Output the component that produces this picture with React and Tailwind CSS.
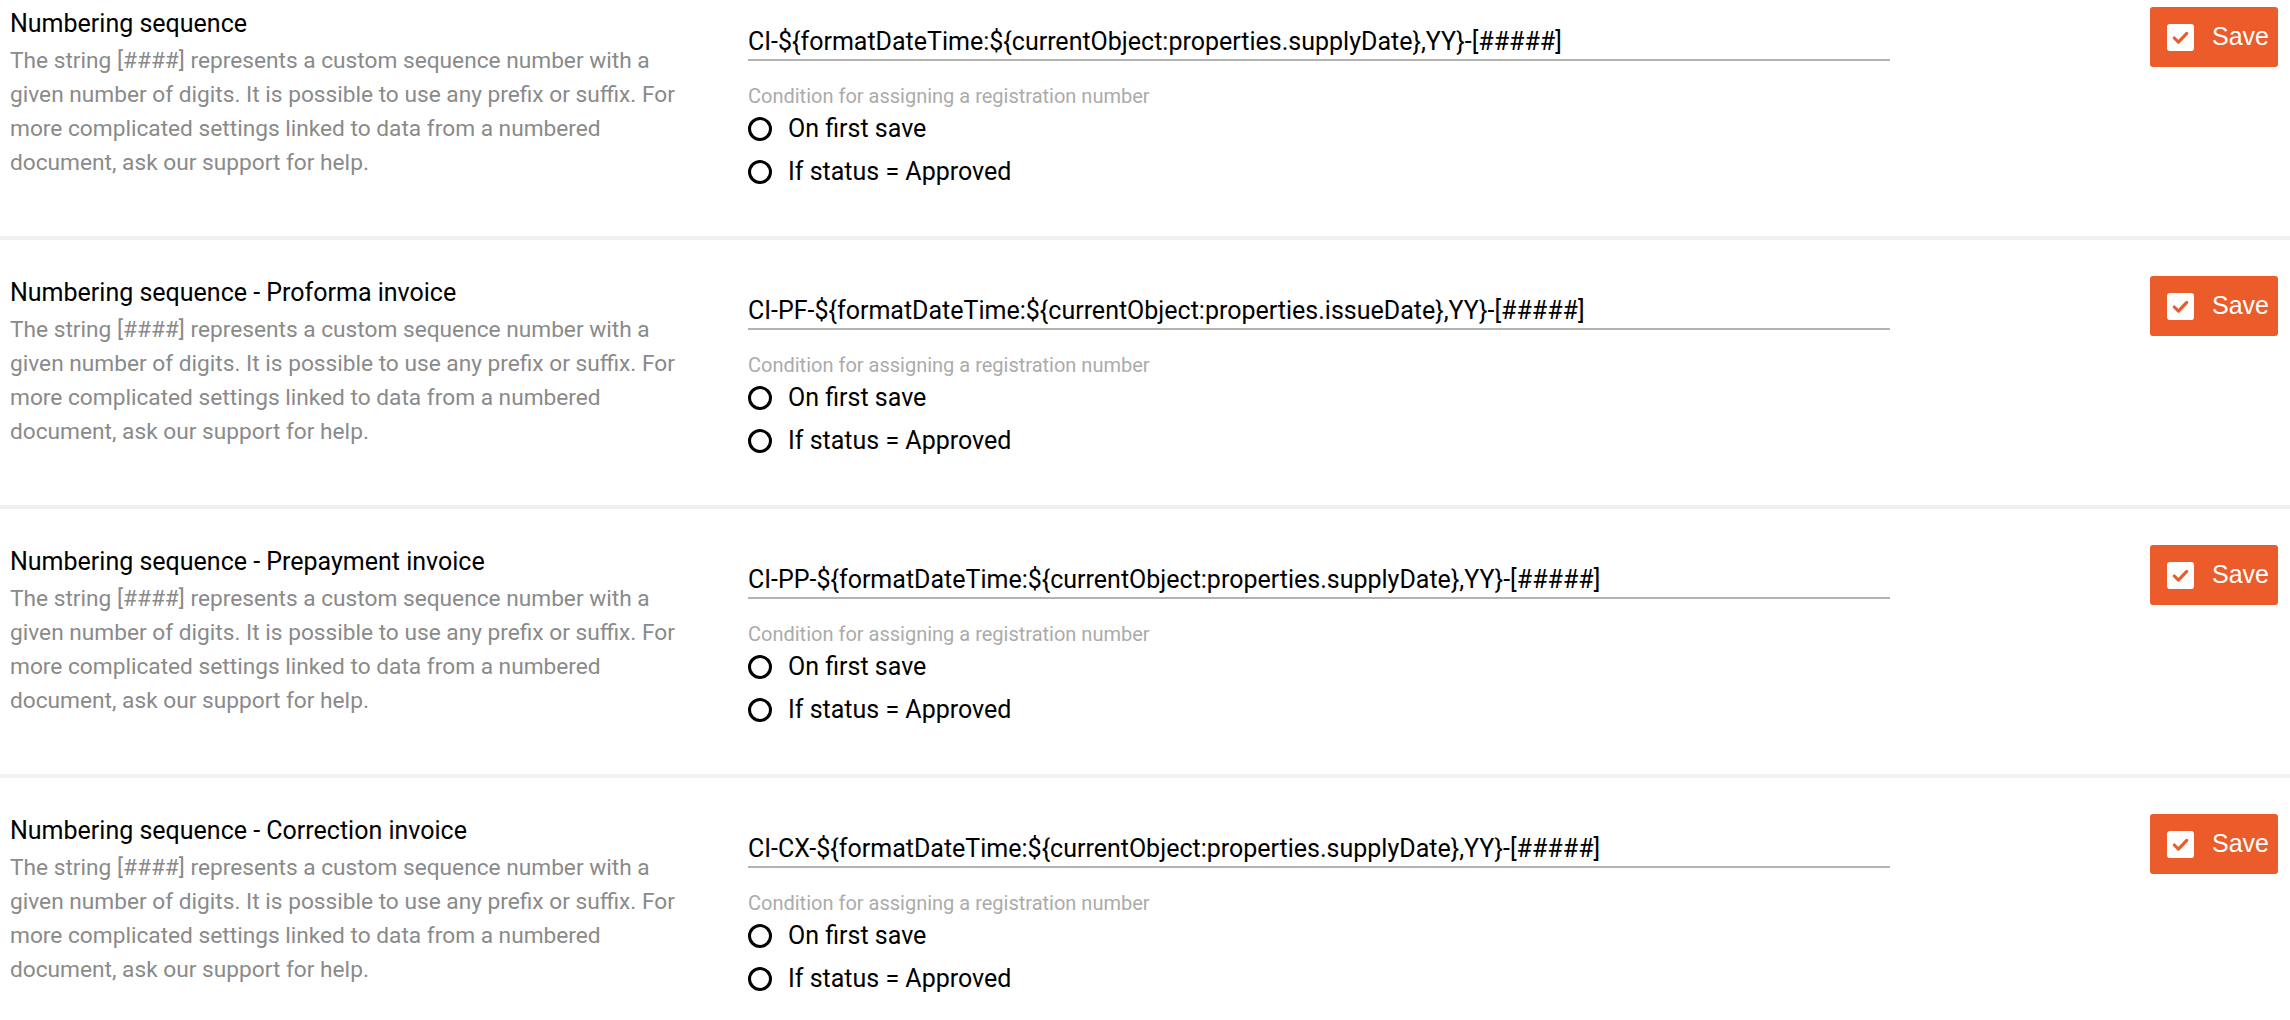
import React from "react";

const sections = [
  {
    title: "Numbering sequence",
    value: "CI-${formatDateTime:${currentObject:properties.supplyDate},YY}-[#####]",
  },
  {
    title: "Numbering sequence - Proforma invoice",
    value: "CI-PF-${formatDateTime:${currentObject:properties.issueDate},YY}-[#####]",
  },
  {
    title: "Numbering sequence - Prepayment invoice",
    value: "CI-PP-${formatDateTime:${currentObject:properties.supplyDate},YY}-[#####]",
  },
  {
    title: "Numbering sequence - Correction invoice",
    value: "CI-CX-${formatDateTime:${currentObject:properties.supplyDate},YY}-[#####]",
  },
];

function CheckIcon() {
  return (
    <svg width="27" height="27" viewBox="0 0 26 26">
      <rect x="0" y="0" width="26" height="26" rx="3" fill="#ffffff" />
      <polyline
        points="7,13.5 11,17.5 19,9"
        fill="none"
        stroke="#ec5b2a"
        strokeWidth="3"
        strokeLinecap="round"
        strokeLinejoin="round"
      />
    </svg>
  );
}

function Radio({ label }) {
  return (
    <div className="flex items-center h-[29px]">
      <span className="w-[24px] h-[24px] rounded-full border-[3.5px] border-black box-border shrink-0" />
      <span className="ml-[16px] text-[25px] leading-[29px] text-black">{label}</span>
    </div>
  );
}

function Section({ title, value, first }) {
  return (
    <div
      className={
        "flex items-start border-b-4 border-[#f0f0f0] pb-[50px] " +
        (first ? "pt-[7px]" : "pt-[36px]")
      }
    >
      <div className="w-[748px] shrink-0 pl-[10px]">
        <div className="mt-[2px] text-[25px] leading-[29px] text-black">{title}</div>
        <div className="mt-[6px] w-[680px] text-[22.7px] leading-[34px] text-[#8a8a8a]">
          The string [####] represents a custom sequence number with a given number of digits. It is possible to use any prefix or suffix. For more complicated settings linked to data from a numbered document, ask our support for help.
        </div>
      </div>
      <div className="w-[1142px] shrink-0 pt-[20px]">
        <div className="text-[25px] leading-[29px] text-black pb-[3px] border-b-2 border-[#b3b3b3] whitespace-nowrap">
          {value}
        </div>
        <div className="mt-[24px] text-[20px] leading-[23px] text-[#ababab]">
          Condition for assigning a registration number
        </div>
        <div className="mt-[6px] flex flex-col gap-[14px]">
          <Radio label="On first save" />
          <Radio label="If status = Approved" />
        </div>
      </div>
      <div className="flex-1 flex justify-end pr-[12px]">
        <button className="flex items-center h-[60px] w-[128px] rounded-[3px] bg-[#ec5b2a] pl-[17px] text-white">
          <CheckIcon />
          <span className="ml-[18px] text-[25px] font-['Liberation_Sans',Arial,sans-serif]">Save</span>
        </button>
      </div>
    </div>
  );
}

export default function App() {
  return (
    <div className="w-[2290px] h-[1020px] overflow-hidden bg-white font-['Roboto','Noto_Sans',sans-serif]">
      {sections.map((s, i) => (
        <Section key={i} title={s.title} value={s.value} first={i === 0} />
      ))}
    </div>
  );
}
